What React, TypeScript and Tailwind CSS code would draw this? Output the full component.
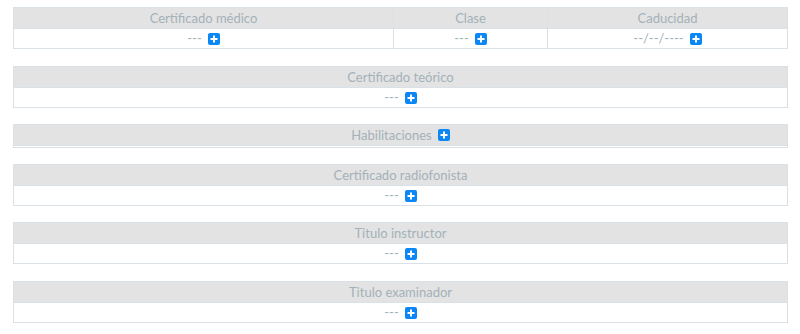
import React from "react";

const Plus = () => (
  <span className="inline-flex items-center justify-center w-[12px] h-[12px] rounded-[2px] bg-[#0b86f5] align-middle">
    <svg width="8" height="8" viewBox="0 0 8 8">
      <rect x="3" y="0.5" width="2" height="7" fill="#fff" />
      <rect x="0.5" y="3" width="7" height="2" fill="#fff" />
    </svg>
  </span>
);

const Cell = ({ text }: { text: string }) => (
  <span className="inline-flex items-center gap-[6px]">
    <span>{text}</span>
    <Plus />
  </span>
);

const th = "bg-[#e3e3e3] border border-[#d9e1e6] h-[21px] p-0 font-normal text-center";
const td = "bg-white border border-[#d9e1e6] h-[20px] p-0 text-center";

const Simple = ({ title }: { title: string }) => (
  <table className="w-full border-collapse table-fixed">
    <thead>
      <tr>
        <th className={th}>{title}</th>
      </tr>
    </thead>
    <tbody>
      <tr>
        <td className={td}>
          <Cell text="---" />
        </td>
      </tr>
    </tbody>
  </table>
);

export default function App() {
  return (
    <div
      className="w-[800px] h-[334px] bg-white pl-[13px] pr-[12px] pt-[7px] text-[13px] text-[#a3b1b9] leading-none"
      style={{ fontFamily: "Lato, 'Open Sans', sans-serif" }}
    >
      <div className="flex flex-col gap-[16px]">
        <table className="w-full border-collapse table-fixed">
          <colgroup>
            <col className="w-[380px]" />
            <col className="w-[154px]" />
            <col />
          </colgroup>
          <thead>
            <tr>
              <th className={th}>Certificado médico</th>
              <th className={th}>Clase</th>
              <th className={th}>Caducidad</th>
            </tr>
          </thead>
          <tbody>
            <tr>
              <td className={td}>
                <Cell text="---" />
              </td>
              <td className={td}>
                <Cell text="---" />
              </td>
              <td className={td}>
                <Cell text="--/--/----" />
              </td>
            </tr>
          </tbody>
        </table>
        <div className="mt-[1px]">
          <Simple title="Certificado teórico" />
        </div>
        <table className="w-full border-collapse table-fixed">
          <thead>
            <tr>
              <th className={th}>
                <Cell text="Habilitaciones" />
              </th>
            </tr>
          </thead>
          <tbody>
            <tr>
              <td className="bg-white border border-[#d9e1e6] h-[2px] p-0"></td>
            </tr>
          </tbody>
        </table>
        <Simple title="Certificado radiofonista" />
        <Simple title="Titulo instructor" />
        <div className="mt-[1px]">
          <Simple title="Titulo examinador" />
        </div>
      </div>
    </div>
  );
}
